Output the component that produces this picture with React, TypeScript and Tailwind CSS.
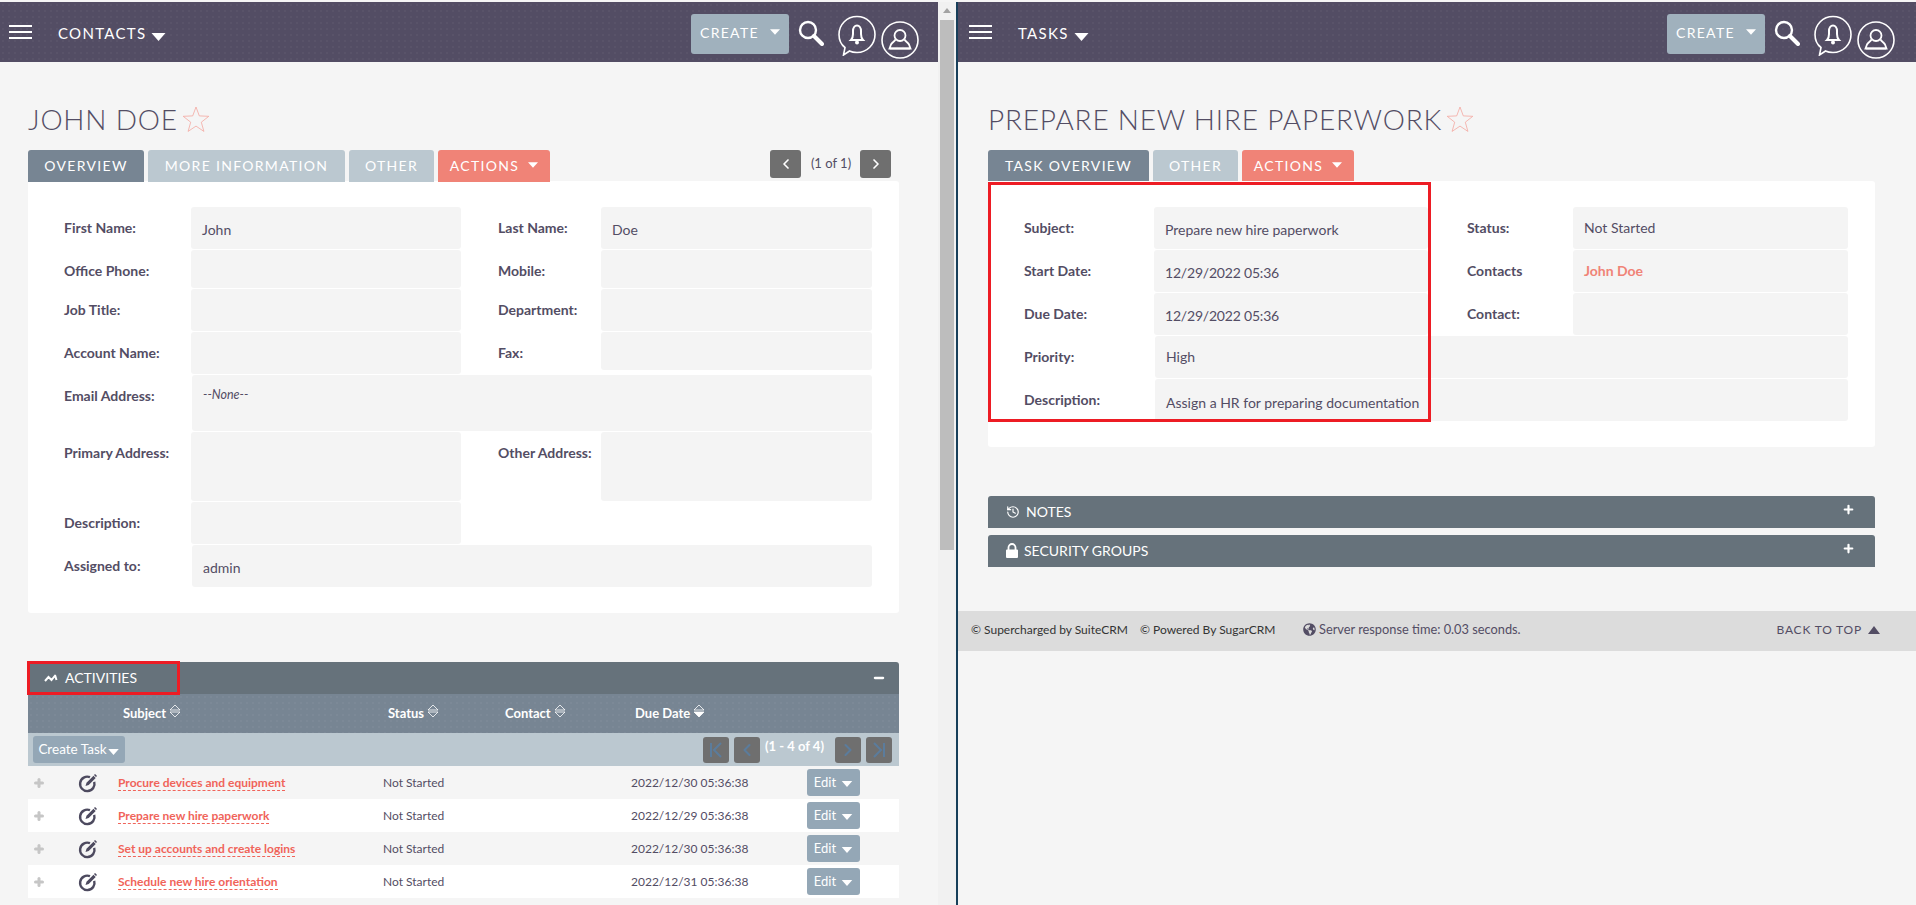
import type { ReactNode } from 'react';
import { Plus, Minus, History, ChevronLeft, ChevronRight } from 'lucide-react';
import { FaGlobeAmericas } from 'react-icons/fa';

const dots =
  'bg-[radial-gradient(rgba(255,255,255,0.035)_1px,transparent_1px)] bg-[length:6px_6px]';

function Caret({ className }: { className: string }) {
  return (
    <svg viewBox="0 0 14 8" className={className} fill="currentColor">
      <path d="M0 0h14L7 8z" />
    </svg>
  );
}

function SearchIcon() {
  return (
    <svg viewBox="0 0 26 26" className="h-[26px] w-[26px]" fill="none" stroke="white">
      <circle cx="10" cy="10" r="8" strokeWidth="2.4" />
      <path d="M16 16l8 8" strokeWidth="4" strokeLinecap="round" />
    </svg>
  );
}

function BellBubble() {
  return (
    <svg viewBox="0 0 38 41" className="h-[41px] w-[38px]" fill="none" stroke="white" strokeWidth="1.6">
      <path d="M7 32.5C3 29.5 1 25 1 19.5 1 9.5 9 1.5 19 1.5s18 8 18 18-8 18-18 18c-3 0-5.500-.5-7.500-1.500L5.500 40z" />
      <path
        d="M13 25c1.500-1.500 2-3 2-6v-3c0-3 1.700-5.500 4-5.500s4 2.500 4 5.500v3c0 3 .5 4.500 2 6z"
        fill="none"
        strokeWidth="2"
      />
      <circle cx="19" cy="27.500" r="2" fill="white" stroke="none" />
    </svg>
  );
}

function UserCircle() {
  return (
    <svg viewBox="0 0 38 38" className="h-[38px] w-[38px]" fill="none" stroke="white" strokeWidth="1.600">
      <circle cx="19" cy="19" r="18" />
      <circle cx="19" cy="14.500" r="5.500" strokeWidth="1.800" />
      <path d="M14.500 18.500c-1 2-3.500 3-4.500 5l-1.500 4h21l-1.500-4c-1-2-3.500-3-4.500-5" strokeWidth="1.800" />
      <path d="M9 27.500h20" strokeWidth="1.800" />
    </svg>
  );
}

function Star() {
  return (
    <svg viewBox="0 0 28 26" className="h-[26px] w-[28px]" fill="none" stroke="#f4a79f" strokeWidth="0.800">
      <path d="M14 1l3.300 8.900 9.500.4-7.500 5.900 2.600 9.200L14 20.100 6.100 25.400l2.600-9.200L1.200 10.300l9.500-.4z" />
    </svg>
  );
}

function EditCircle() {
  return (
    <svg viewBox="0 0 20 20" className="h-[20px] w-[20px]" fill="none">
      <path d="M12 4.200a7.200 7.200 0 1 0 4.200 4.600" stroke="#4d4a5f" strokeWidth="2.400" />
      <path d="M7.500 13l1-3.200 7-7 2.200 2.200-7 7z" fill="#4d4a5f" />
      <path d="M16.500 1.500l2 2" stroke="#4d4a5f" strokeWidth="1.600" />
    </svg>
  );
}

function LockIcon() {
  return (
    <svg viewBox="0 0 12 15" className="h-[15px] w-[12px]" fill="white">
      <path d="M1 6.500h10a1 1 0 0 1 1 1V14a1 1 0 0 1-1 1H1a1 1 0 0 1-1-1V7.500a1 1 0 0 1 1-1z" />
      <path d="M2.500 7V4.500a3.500 3.500 0 0 1 7 0V7" fill="none" stroke="white" strokeWidth="1.800" />
    </svg>
  );
}

function SortArrows({ active }: { active?: boolean }) {
  return (
    <svg viewBox="0 0 12 14" className="ml-[3px] h-[14px] w-[12px] -translate-y-[3px]" stroke="white" strokeWidth="0.800">
      <path d="M6 1l5 5H1z" fill="none" />
      <path d="M6 13l5-5H1z" fill={active ? 'white' : 'none'} />
    </svg>
  );
}

function Navbar({ module, menuX, endX }: { module: string; menuX: string; endX: string }) {
  return (
    <div className={`flex h-[60px] items-start bg-[#534d64] ${dots}`}>
      <div className={`mt-[23px] flex w-[23px] flex-col gap-[4px] ${menuX}`}>
        <div className="h-[2px] bg-white" />
        <div className="h-[2px] bg-white" />
        <div className="h-[2px] bg-white" />
      </div>
      <div className="mt-[21px] ml-[26px] flex items-center text-[15px] leading-[20px] tracking-[1.300px] text-white">
        {module}
        <Caret className="mt-[7px] ml-[5px] h-[8px] w-[15px]" />
      </div>
      <div className={`ml-auto flex items-start ${endX}`}>
        <div className="mt-[12px] flex h-[40px] w-[98px] items-center justify-between rounded-[3px] bg-[#a0b1bd] pr-[9px] pb-[3px] pl-[9px] text-[14px] tracking-[1.300px] text-white">
          CREATE
          <Caret className="-mt-[1px] h-[6px] w-[10px]" />
        </div>
        <div className="mt-[18px] ml-[9px]">
          <SearchIcon />
        </div>
        <div className="mt-[13px] ml-[14px]">
          <BellBubble />
        </div>
        <div className="mt-[19px] ml-[5px]">
          <UserCircle />
        </div>
      </div>
    </div>
  );
}

function Tab({ children, className }: { children: ReactNode; className: string }) {
  return (
    <div
      className={`relative flex h-[32px] items-center justify-center rounded-t-[3px] pb-[2px] text-[14px] tracking-[1.300px] text-white ${className}`}
    >
      {children}
    </div>
  );
}

function PageTitle({ children }: { children: string }) {
  return (
    <div className="mt-[30px] mb-[4px] flex h-[54px] items-center text-[28px] font-light tracking-[0.800px] text-[#534d64]">
      {children}
      <span className="ml-[4px]">
        <Star />
      </span>
    </div>
  );
}

function Field({
  label,
  value,
  labelW,
  valueCls,
  text,
}: {
  label: string;
  value?: ReactNode;
  labelW: string;
  valueCls: string;
  text?: string;
}) {
  return (
    <>
      <div className={`shrink-0 text-[14px] leading-[42px] font-bold text-[#534d64] ${labelW}`}>{label}</div>
      <div className={`shrink-0 rounded-[3px] bg-[#f4f4f4] pl-[11px] text-[14px] text-[#534d64] ${valueCls} ${text ?? 'leading-[46px]'}`}>
        {value}
      </div>
    </>
  );
}

function ContactForm() {
  const l = 'w-[127px]';
  const r = 'ml-[37px] w-[103px]';
  return (
    <div className="h-[432px] rounded-b-[3px] rounded-tr-[3px] bg-white pt-[26px] pl-[36px]">
      <div className="mb-px flex">
        <Field label="First Name:" value="John" labelW={l} valueCls="h-[42px] w-[270px]" />
        <Field label="Last Name:" value="Doe" labelW={r} valueCls="h-[42px] w-[271px]" />
      </div>
      <div className="mb-px flex h-[38px]">
        <Field label="Office Phone:" labelW={l} valueCls="h-[38px] w-[270px]" />
        <Field label="Mobile:" labelW={r} valueCls="h-[38px] w-[271px]" />
      </div>
      <div className="mb-px flex">
        <Field label="Job Title:" labelW={l} valueCls="h-[42px] w-[270px]" />
        <Field label="Department:" labelW={r} valueCls="h-[42px] w-[271px]" />
      </div>
      <div className="mb-px flex">
        <Field label="Account Name:" labelW={l} valueCls="h-[42px] w-[270px]" />
        <Field label="Fax:" labelW={r} valueCls="h-[38px] w-[271px]" />
      </div>
      <div className="mb-px flex">
        <Field
          label="Email Address:"
          value={<span className="text-[12.500px] italic">--None--</span>}
          labelW="w-[128px]"
          valueCls="h-[56px] w-[680px]"
          text="leading-[38px]"
        />
      </div>
      <div className="mb-px flex">
        <Field label="Primary Address:" labelW={l} valueCls="h-[69px] w-[270px]" />
        <Field label="Other Address:" labelW={r} valueCls="h-[69px] w-[271px]" />
      </div>
      <div className="mb-px flex">
        <Field label="Description:" labelW={l} valueCls="h-[42px] w-[270px]" />
      </div>
      <div className="flex">
        <Field label="Assigned to:" value="admin" labelW="w-[128px]" valueCls="h-[42px] w-[680px]" />
      </div>
    </div>
  );
}

function PagerBtn({ children, className }: { children: ReactNode; className: string }) {
  return (
    <div className={`flex h-[26px] w-[26px] items-center justify-center rounded-[3px] bg-[#6f6f6f] text-[#5b7c9c] ${className}`}>
      {children}
    </div>
  );
}

function PagerEnd({ flip }: { flip?: boolean }) {
  return (
    <svg viewBox="0 0 14 16" className={`h-[16px] w-[14px] ${flip ? '-scale-x-100' : ''}`} fill="none" stroke="currentColor" strokeWidth="2">
      <path d="M2 1v14M12 1L5 8l7 7" />
    </svg>
  );
}

const activities = [
  ['Procure devices and equipment', '2022/12/30 05:36:38', 'bg-[#f5f5f5]'],
  ['Prepare new hire paperwork', '2022/12/29 05:36:38', 'bg-white'],
  ['Set up accounts and create logins', '2022/12/30 05:36:38', 'bg-[#f5f5f5]'],
  ['Schedule new hire orientation', '2022/12/31 05:36:38', 'bg-white'],
];

function ActivitiesPanel() {
  return (
    <div className="mt-[49px]">
      <div className="relative flex h-[32px] items-center justify-between rounded-t-[3px] bg-[#66727b] pr-[13px] pl-[16px] text-[14px] text-white">
        <div className="flex items-center pb-[2px]">
          <svg viewBox="0 0 14 10" className="mt-[2px] mr-[7px] h-[10px] w-[14px]" fill="none" stroke="white" strokeWidth="2">
            <path d="M1 8l3.500-4 3 3 4-5M11 2l1.500 5" />
          </svg>
          ACTIVITIES
        </div>
        <Minus className="h-[14px] w-[14px]" strokeWidth={4} />
        <div className="absolute -top-[1px] -left-[1px] h-[34px] w-[153px] border-[3px] border-[#ed1c24]" />
      </div>
      <div className={`flex h-[39px] items-center bg-[#778593] text-[13px] font-bold text-white ${dots}`}>
        <div className="ml-[95px] flex w-[265px] items-center">
          Subject
          <SortArrows />
        </div>
        <div className="flex w-[117px] items-center">
          Status
          <SortArrows />
        </div>
        <div className="flex w-[130px] items-center">
          Contact
          <SortArrows />
        </div>
        <div className="flex items-center">
          Due Date
          <SortArrows active />
        </div>
      </div>
      <div className="flex h-[33px] items-center bg-[#bbc8d0] pr-[7px] pl-[5px]">
        <div className="flex h-[27px] w-[92px] items-center justify-center rounded-[3px] bg-[#94a7b6] text-[13.500px] text-white">
          Create Task
          <Caret className="mt-[4px] h-[6px] w-[13px]" />
        </div>
        <PagerBtn className="ml-auto">
          <PagerEnd />
        </PagerBtn>
        <PagerBtn className="ml-[5px]">
          <ChevronLeft className="h-[20px] w-[20px]" strokeWidth={2.500} />
        </PagerBtn>
        <div className="mb-[6px] ml-[5px] w-[70px] text-[13px] font-bold text-white">(1 - 4 of 4)</div>
        <PagerBtn className="">
          <ChevronRight className="h-[20px] w-[20px]" strokeWidth={2.500} />
        </PagerBtn>
        <PagerBtn className="ml-[5px]">
          <PagerEnd flip />
        </PagerBtn>
      </div>
      {activities.map(([subject, date, bg]) => (
        <div key={subject} className={`flex h-[33px] items-center text-[12px] text-[#534d64] ${bg}`}>
          <Plus className="ml-[5px] h-[12px] w-[12px] text-[#c6c6c6]" strokeWidth={6} />
          <div className="ml-[33px]">
            <EditCircle />
          </div>
          <div className="ml-[20px] w-[265px]">
            <span className="border-b border-dashed border-[#f0645a] font-bold text-[#f0645a]">{subject}</span>
          </div>
          <div className="w-[248px]">Not Started</div>
          <div className="w-[176px]">{date}</div>
          <div className="flex h-[27px] w-[53px] items-center justify-center gap-[5px] rounded-[3px] bg-[#94a7b6] text-[13px] text-white">
            Edit
            <Caret className="mt-[3px] h-[6px] w-[12px]" />
          </div>
        </div>
      ))}
    </div>
  );
}

function LeftPane() {
  return (
    <div className="flex w-[956px] shrink-0">
      <div className="w-[938px] shrink-0">
        <Navbar module="CONTACTS" menuX="ml-[9px]" endX="mr-[19px]" />
        <div className="pr-[39px] pl-[28px]">
          <PageTitle>JOHN DOE</PageTitle>
          <div className="-mb-px flex">
            <Tab className="w-[116px] bg-[#778593]">OVERVIEW</Tab>
            <Tab className="ml-[4px] w-[197px] bg-[#bbc8d0]">MORE INFORMATION</Tab>
            <Tab className="ml-[4px] w-[85px] bg-[#bbc8d0]">OTHER</Tab>
            <Tab className="ml-[4px] w-[112px] gap-[9px] bg-[#f08377]">
              ACTIONS
              <Caret className="-mt-[1px] h-[6px] w-[10px]" />
            </Tab>
            <div className="mr-[8px] ml-auto flex items-start text-[13px] text-[#534d64]">
              <div className="flex h-[28px] w-[31px] items-center justify-center rounded-[3px] bg-[#6f6f6f] text-white">
                <ChevronLeft className="h-[16px] w-[16px]" strokeWidth={2.500} />
              </div>
              <div className="w-[60px] pt-[4px] text-center text-[#534d64]">(1 of 1)</div>
              <div className="ml-[-1px] flex h-[28px] w-[31px] items-center justify-center rounded-[3px] bg-[#6f6f6f] text-white">
                <ChevronRight className="h-[16px] w-[16px]" strokeWidth={2.500} />
              </div>
            </div>
          </div>
          <ContactForm />
          <ActivitiesPanel />
        </div>
      </div>
      <div className="flex w-[18px] shrink-0 flex-col items-center bg-[#f1f1f1]">
        <svg viewBox="0 0 8 5" className="mt-[6px] h-[5px] w-[8px]" fill="#a3a3a3">
          <path d="M4 0l4 5H0z" />
        </svg>
        <div className="mt-[7px] h-[530px] w-[14px] bg-[#bdbdbd]" />
      </div>
    </div>
  );
}

function TaskRow({ children }: { children: ReactNode }) {
  return <div className="mb-px flex">{children}</div>;
}

function CollapsedBar({ icon, title, className }: { icon: ReactNode; title: string; className: string }) {
  return (
    <div className={`flex h-[32px] items-center justify-between rounded-t-[3px] bg-[#66727b] pr-[20px] pl-[18px] text-[14px] text-white ${className}`}>
      <div className="flex items-center gap-[6px] pb-[2px]">
        {icon}
        {title}
      </div>
      <Plus className="-mt-[5px] h-[13px] w-[13px]" strokeWidth={4} />
    </div>
  );
}

function RightPane() {
  const l = 'w-[130px]';
  const v = 'h-[42px] w-[274px]';
  const r = 'ml-[39px] w-[106px]';
  const rv = 'h-[42px] w-[275px]';
  const date = <span className="tracking-[-0.200px]">12/29/2022 05:36</span>;
  return (
    <div className="flex-1 border-l-2 border-[#173f5a]">
      <Navbar module="TASKS" menuX="ml-[11px]" endX="mr-[21px]" />
      <div className="pr-[41px] pl-[30px]">
        <PageTitle>PREPARE NEW HIRE PAPERWORK</PageTitle>
        <div className="-mb-px flex">
          <Tab className="w-[161px] bg-[#778593]">TASK OVERVIEW</Tab>
          <Tab className="ml-[4px] w-[85px] bg-[#bbc8d0]">OTHER</Tab>
          <Tab className="ml-[4px] w-[112px] gap-[9px] bg-[#f08377]">
            ACTIONS
            <Caret className="-mt-[1px] h-[6px] w-[10px]" />
          </Tab>
        </div>
        <div className="relative h-[266px] rounded-b-[3px] rounded-tr-[3px] bg-white pt-[26px] pl-[36px]">
          <TaskRow>
            <Field label="Subject:" value="Prepare new hire paperwork" labelW={l} valueCls={v} />
            <Field label="Status:" value="Not Started" labelW={r} valueCls={rv} text="leading-[42px]" />
          </TaskRow>
          <TaskRow>
            <Field label="Start Date:" value={date} labelW={l} valueCls={v} />
            <Field
              label="Contacts"
              value={<span className="font-bold text-[#f08377]">John Doe</span>}
              labelW={r}
              valueCls={rv}
              text="leading-[42px]"
            />
          </TaskRow>
          <TaskRow>
            <Field label="Due Date:" value={date} labelW={l} valueCls={v} />
            <Field label="Contact:" labelW={r} valueCls={rv} />
          </TaskRow>
          <TaskRow>
            <Field label="Priority:" value="High" labelW="w-[131px]" valueCls="h-[42px] w-[693px]" text="leading-[42px]" />
          </TaskRow>
          <TaskRow>
            <Field
              label="Description:"
              value="Assign a HR for preparing documentation"
              labelW="w-[131px]"
              valueCls="h-[42px] w-[693px]"
              text="leading-[48px]"
            />
          </TaskRow>
          <div className="absolute top-[1px] left-0 h-[240px] w-[443px] border-[3px] border-[#ed1c24]" />
        </div>
        <CollapsedBar
          className="mt-[49px]"
          title="NOTES"
          icon={<History className="mt-[2px] h-[14px] w-[14px]" strokeWidth={2} />}
        />
        <CollapsedBar className="mt-[7px]" title="SECURITY GROUPS" icon={<LockIcon />} />
      </div>
      <div className="mt-[44px] flex h-[40px] items-start bg-[#dcdcdc] pt-[3px] pr-[36px] pl-[13px] text-[12px] leading-[20px] text-[#333]">
        <div className="mt-[6px] w-[169px]">© Supercharged by SuiteCRM</div>
        <div className="mt-[6px] w-[163px]">© Powered By SugarCRM</div>
        <div className="mt-[5px] flex items-center gap-[3px] text-[12.800px] text-[#534d64]">
          <FaGlobeAmericas className="h-[13px] w-[13px]" />
          Server response time: 0.03 seconds.
        </div>
        <div className="mt-[6px] ml-auto flex items-center gap-[6px] tracking-[0.800px] text-[#534d64]">
          BACK TO TOP
          <svg viewBox="0 0 12 8" className="h-[8px] w-[12px]" fill="#534d64">
            <path d="M6 0l6 8H0z" />
          </svg>
        </div>
      </div>
    </div>
  );
}

export default function App() {
  return (
    <div className="flex h-[905px] w-[1916px] overflow-hidden bg-[#f5f5f5] pt-[2px] font-['Lato',sans-serif]">
      <LeftPane />
      <RightPane />
    </div>
  );
}
